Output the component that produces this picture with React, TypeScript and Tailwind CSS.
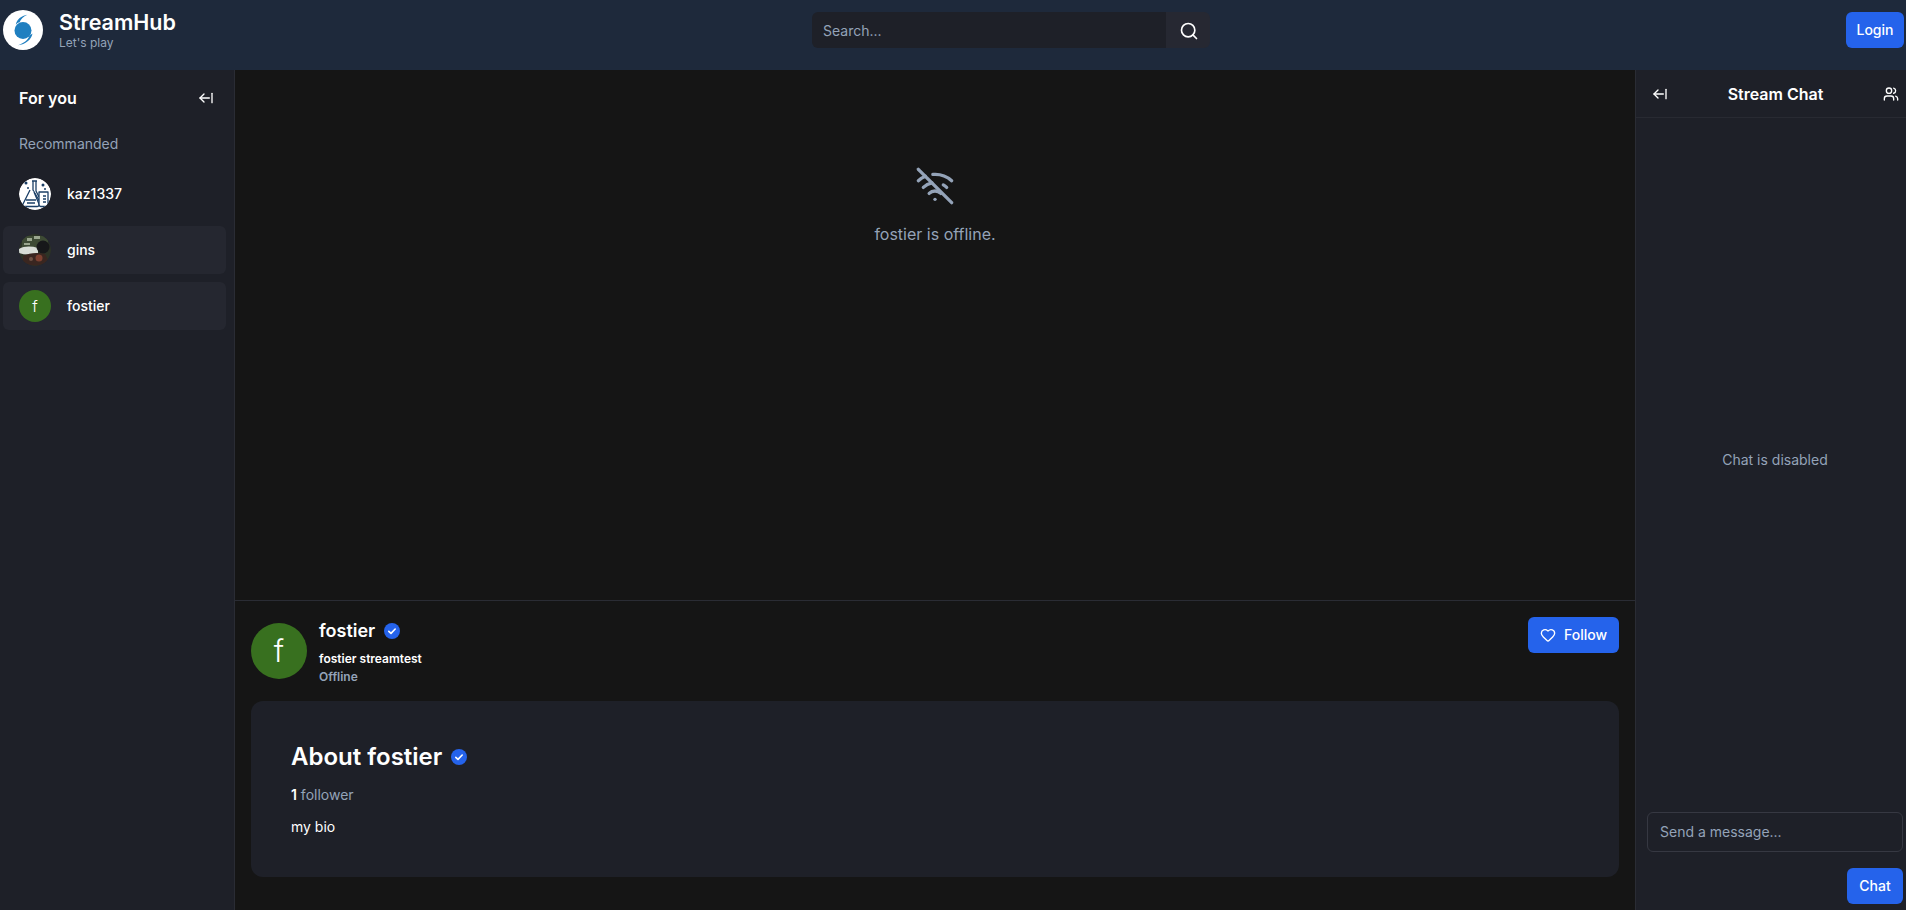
import { ArrowLeftFromLine, Heart, Search, Users, WifiOff } from "lucide-react";

function Verified({ className }: { className: string }) {
  return (
    <svg viewBox="0 0 16 16" className={className}>
      <circle cx="8" cy="8" r="8" fill="#2563eb" />
      <path d="M4.8 8.300 7 10.400 11.200 6" fill="none" stroke="#fff" strokeWidth="1.600" strokeLinecap="round" strokeLinejoin="round" />
    </svg>
  );
}

function Logo() {
  return (
    <svg viewBox="0 0 40 40" className="h-10 w-10 shrink-0">
      <circle cx="20" cy="20" r="20" fill="#fff" />
      <circle cx="20" cy="20.500" r="8.500" fill="#1f7fc0" />
      <path d="M12.800 14.500c1-5 5.500-9 11.500-9.800-4 2-6.500 4.300-7.600 7.400-1.500.4-2.800 1.200-3.900 2.400z" fill="#1f7fc0" />
      <path d="M29.500 23.500c-1 6-7 11-14.500 11.800 5.500-2 10-5 11.500-9.800 1.100-.5 2.100-1.200 3-2z" fill="#1f7fc0" />
    </svg>
  );
}

function KazAvatar() {
  return (
    <svg viewBox="0 0 32 32" className="h-8 w-8 shrink-0 rounded-full">
      <circle cx="16" cy="16" r="16" fill="#fff" />
      <g fill="none" stroke="#1b3f66" strokeWidth="1.300" strokeLinejoin="round">
        <path d="M13 3h5M14 3v9l7 12M17 3v10l3 6" />
        <path d="M11 12 4 26c-.5 1.500.5 2.500 2 2.500h12c1.500 0 2.500-1 2-2.500l-5-12" fill="#fff" />
        <path d="M7 22h10M8 25h8" />
        <path d="M20 14h9v12c0 1.500-1 2.500-2 2.500h-5c-1 0-2-1-2-2.500z" fill="#fff" />
        <path d="M24 18h3M24 21h3M24 24h3" />
      </g>
      <circle cx="7" cy="5" r="1.500" fill="#1b3f66" />
      <circle cx="9" cy="10" r="1" fill="#1b3f66" />
      <circle cx="24" cy="7" r="1.500" fill="#1b3f66" />
      <circle cx="26" cy="11" r="1" fill="#1b3f66" />
    </svg>
  );
}

function GinsAvatar() {
  return (
    <svg viewBox="0 0 32 32" className="h-8 w-8 shrink-0 rounded-full">
      <circle cx="16" cy="16" r="16" fill="#2c3326" />
      <path d="M3 2h26v12H3z" fill="#3d4a34" />
      <path d="M8 4h5v3H8zM15 2h6v3h-6zM5 9h6v2H5z" fill="#9aa68e" />
      <path d="M0 15c5-3 12-3 19-1v5c-7 2-13 2-19 0z" fill="#d8ddd6" />
      <circle cx="24" cy="13" r="6.500" fill="#17181a" />
      <path d="M4 22c6-3 14-4 22-2l3 6c-6 7-18 7-25 2z" fill="#3a2620" />
      <circle cx="20" cy="24" r="3.500" fill="#7d4030" />
      <circle cx="12" cy="25" r="2" fill="#6e5244" />
    </svg>
  );
}

function LetterAvatar({ large }: { large?: boolean }) {
  return large ? (
    <div className="flex h-14 w-14 shrink-0 items-center justify-center rounded-full bg-[#38701f] text-3xl font-light text-white">f</div>
  ) : (
    <div className="flex h-8 w-8 shrink-0 items-center justify-center rounded-full bg-[#38701f] text-base font-light text-white">f</div>
  );
}

function Row({ name, active, avatar }: { name: string; active?: boolean; avatar: React.ReactNode }) {
  return (
    <div className={active ? "flex h-12 items-center gap-4 rounded-md bg-[#252730] px-4" : "flex h-12 items-center gap-4 rounded-md px-4"}>
      {avatar}
      <span className="text-sm font-medium text-white">{name}</span>
    </div>
  );
}

export default function App() {
  return (
    <div className="flex h-[910px] flex-col overflow-hidden bg-[#151515] font-['Inter',sans-serif] text-white">
      <header className="flex h-[70px] shrink-0 items-center bg-[#1e293b] pr-0.5 pb-2.5 pl-[3px]">
        <div className="flex w-[809px] shrink-0 items-center gap-4">
          <Logo />
          <div className="flex flex-col">
            <span className="text-[21.5px] leading-[26px] font-semibold text-white">StreamHub</span>
            <span className="text-xs leading-4 text-[#94a3b8]">Let's play</span>
          </div>
        </div>
        <div className="flex">
          <div className="flex h-9 w-[354px] items-center rounded-l-md bg-[#1e2028] px-[11px] pt-0.5 text-sm text-[#94a3b8]">Search...</div>
          <div className="flex h-9 w-11 items-center justify-center rounded-r-md bg-[#262832] pt-0.5 pl-0.5">
            <Search size={20} className="text-white" />
          </div>
        </div>
        <div className="flex flex-1 justify-end">
          <button className="h-9 w-[58px] rounded-md bg-[#2563eb] text-sm font-medium text-white">Login</button>
        </div>
      </header>
      <div className="flex min-h-0 flex-1">
        <aside className="w-[235px] shrink-0 border-r border-[#2a2c34] bg-[#1e2028]">
          <div className="flex items-center justify-between pt-4 pr-5 pb-0 pl-[19px]">
            <span className="text-base leading-6 font-semibold text-white">For you</span>
            <ArrowLeftFromLine size={16} className="text-white" />
          </div>
          <div className="mt-6 pl-[19px] text-sm leading-5 text-[#94a3b8]">Recommanded</div>
          <div className="mt-4 flex flex-col gap-2 pr-2 pl-[3px]">
            <Row name="kaz1337" avatar={<KazAvatar />} />
            <Row name="gins" active avatar={<GinsAvatar />} />
            <Row name="fostier" active avatar={<LetterAvatar />} />
          </div>
        </aside>
        <main className="flex min-w-0 flex-1 flex-col">
          <div className="flex h-[531px] shrink-0 flex-col items-center border-b border-[#2a2c34] pt-[96px]">
            <WifiOff size={40} className="text-[#94a3b8]" />
            <p className="mt-4 text-base leading-6 text-[#94a3b8]">fostier is offline.</p>
          </div>
          <div className="flex items-start justify-between px-4 pt-4">
            <div className="flex gap-3">
              <div className="pt-1.5">
                <LetterAvatar large />
              </div>
              <div>
                <div className="flex items-center gap-[9px]">
                  <span className="text-lg leading-7 font-semibold text-white">fostier</span>
                  <Verified className="h-4 w-4" />
                </div>
                <p className="mt-1.5 text-xs leading-4 font-semibold text-white">fostier streamtest</p>
                <p className="mt-0.5 text-xs leading-4 font-semibold text-[#94a3b8]">Offline</p>
              </div>
            </div>
            <button className="flex h-9 w-[91px] items-center justify-center gap-2 rounded-md bg-[#2563eb] text-sm font-medium text-white">
              <Heart size={16} />
              Follow
            </button>
          </div>
          <section className="mx-4 mt-4 rounded-xl bg-[#1e2028] px-10 pt-10 pb-10">
            <div className="flex items-center gap-[9px]">
              <h2 className="text-2xl leading-8 font-semibold text-white">About fostier</h2>
              <Verified className="h-4 w-4" />
            </div>
            <p className="mt-3 text-sm leading-5 text-[#94a3b8]">
              <span className="font-semibold text-white">1</span> follower
            </p>
            <p className="mt-3 text-sm leading-5 text-white">my bio</p>
          </section>
        </main>
        <aside className="flex w-[271px] shrink-0 flex-col border-l border-[#2a2c34] bg-[#1e2028]">
          <div className="flex h-[48px] items-center justify-between border-b border-[#282a32] pr-[7px] pl-4">
            <ArrowLeftFromLine size={16} className="text-white" />
            <span className="text-base font-semibold text-white">Stream Chat</span>
            <Users size={16} className="text-white" />
          </div>
          <div className="flex flex-1 items-center justify-center pb-[10px] pl-2 text-sm text-[#94a3b8]">Chat is disabled</div>
          <div className="flex flex-col items-end gap-4 pr-[3px] pb-1.5 pl-[11px]">
            <div className="flex h-10 w-full items-center rounded-md border border-[#363842] px-3 text-sm text-[#94a3b8]">Send a message...</div>
            <button className="h-9 w-14 rounded-md bg-[#2563eb] text-sm font-medium text-white">Chat</button>
          </div>
        </aside>
      </div>
    </div>
  );
}
